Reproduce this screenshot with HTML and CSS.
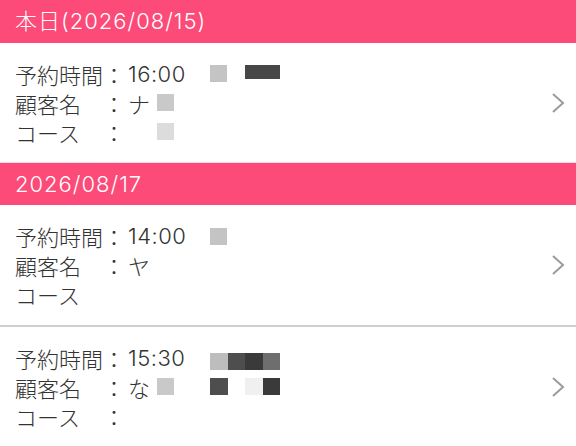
FILE: index.html
```html
<!DOCTYPE html>
<html lang="ja">
<head>
<meta charset="utf-8">
<link rel="stylesheet" href="styles.css">
</head>
<body>
<div class="list">
  <div class="section-header">本日(2026/08/15)</div>
  <div class="card">
    <div class="rows">
      <div class="row"><span class="label">予約時間</span><span class="colon">：</span><span class="value v-time">16:00</span><span class="blur b-light sq"></span><span class="blur b-dark bar1"></span></div>
      <div class="row"><span class="label">顧客名</span><span class="colon">：</span><span class="value v-name">ナ</span><span class="blur b-mid sq"></span></div>
      <div class="row"><span class="label">コース</span><span class="colon">：</span><span class="value v-name"></span><span class="blur b-pale sq"></span></div>
    </div>
    <svg class="chev" viewBox="0 0 14 22" width="14" height="22"><path d="M2 2 L12 11 L2 20" fill="none" stroke="#9b9b9b" stroke-width="2"/></svg>
  </div>

  <div class="section-header">2026/08/17</div>
  <div class="card bordered">
    <div class="rows">
      <div class="row"><span class="label">予約時間</span><span class="colon">：</span><span class="value v-time">14:00</span><span class="blur b-light sq"></span></div>
      <div class="row"><span class="label">顧客名</span><span class="colon">：</span><span class="value v-name">ヤ</span></div>
      <div class="row"><span class="label">コース</span><span class="colon"></span><span class="value v-name"></span></div>
    </div>
    <svg class="chev" viewBox="0 0 14 22" width="14" height="22"><path d="M2 2 L12 11 L2 20" fill="none" stroke="#9b9b9b" stroke-width="2"/></svg>
  </div>
  <div class="card">
    <div class="rows">
      <div class="row"><span class="label">予約時間</span><span class="colon">：</span><span class="value v-time">15:30</span><span class="blur-strip high"><i class="c1"></i><i class="c2"></i><i class="c3"></i><i class="c4"></i></span></div>
      <div class="row"><span class="label">顧客名</span><span class="colon">：</span><span class="value v-name">な</span><span class="blur b-mid sq"></span><span class="blur-strip gap"><i class="c2"></i><i class="none"></i><i class="c5"></i><i class="c3"></i></span></div>
      <div class="row"><span class="label">コース</span><span class="colon">：</span><span class="value v-name"></span></div>
    </div>
    <svg class="chev" viewBox="0 0 14 22" width="14" height="22"><path d="M2 2 L12 11 L2 20" fill="none" stroke="#9b9b9b" stroke-width="2"/></svg>
  </div>
</div>
</body>
</html>
```
FILE: styles.css
```css
* { box-sizing: border-box; }
html, body {
  margin: 0;
  padding: 0;
  background: #ffffff;
}
body {
  width: 576px;
  height: 446px;
  overflow: hidden;
  font-family: "Inter", "Noto Sans CJK JP", sans-serif;
  font-weight: 300;
  color: #333333;
}
.list {
  display: flex;
  flex-direction: column;
}
.section-header {
  height: 43px;
  background: #fc4a79;
  color: #ffffff;
  font-size: 22px;
  line-height: 43px;
  letter-spacing: 1px;
  padding-left: 15px;
  border-top: 1px solid #f7dce4;
}
.section-header:first-child {
  border-top: none;
}
.card {
  display: flex;
  align-items: center;
  height: 119px;
  padding: 15px 11px 15px 15px;
  background: #ffffff;
}
.card.bordered {
  height: 122px;
  border-bottom: 2px solid #cfcfcf;
}
.rows {
  flex: 1;
  display: flex;
  flex-direction: column;
}
.row {
  display: flex;
  align-items: center;
  height: 29px;
  font-size: 22px;
  white-space: nowrap;
}
.label {
  width: 92px;
}
.colon {
  width: 14px;
  display: flex;
  justify-content: center;
  margin-right: 7px;
}
.v-time { width: 82px; letter-spacing: 0.5px; }
.v-name { width: 29px; }
.blur {
  display: inline-block;
  height: 17px;
}
.b-light { background: #c4c4c4; }
.b-mid { background: #c9c9c9; }
.b-pale { background: #dcdcdc; }
.b-dark { background: #474747; }
.sq { width: 17px; }
.bar1 { width: 35px; height: 14px; margin-left: 18px; margin-bottom: 4px; }
.blur-strip {
  display: inline-flex;
}
.blur-strip.high { margin-top: 8px; }
.blur-strip.gap { margin-left: 36px; }
.blur-strip i {
  display: block;
  width: 17.5px;
  height: 17px;
}
.c1 { background: #bdbdbd; }
.c2 { background: #4e4e4e; }
.c3 { background: #3a3a3a; }
.c4 { background: #6e6e6e; }
.c5 { background: #f0f0f0; }
.none { background: transparent; }
.chev {
  flex: none;
}
```
